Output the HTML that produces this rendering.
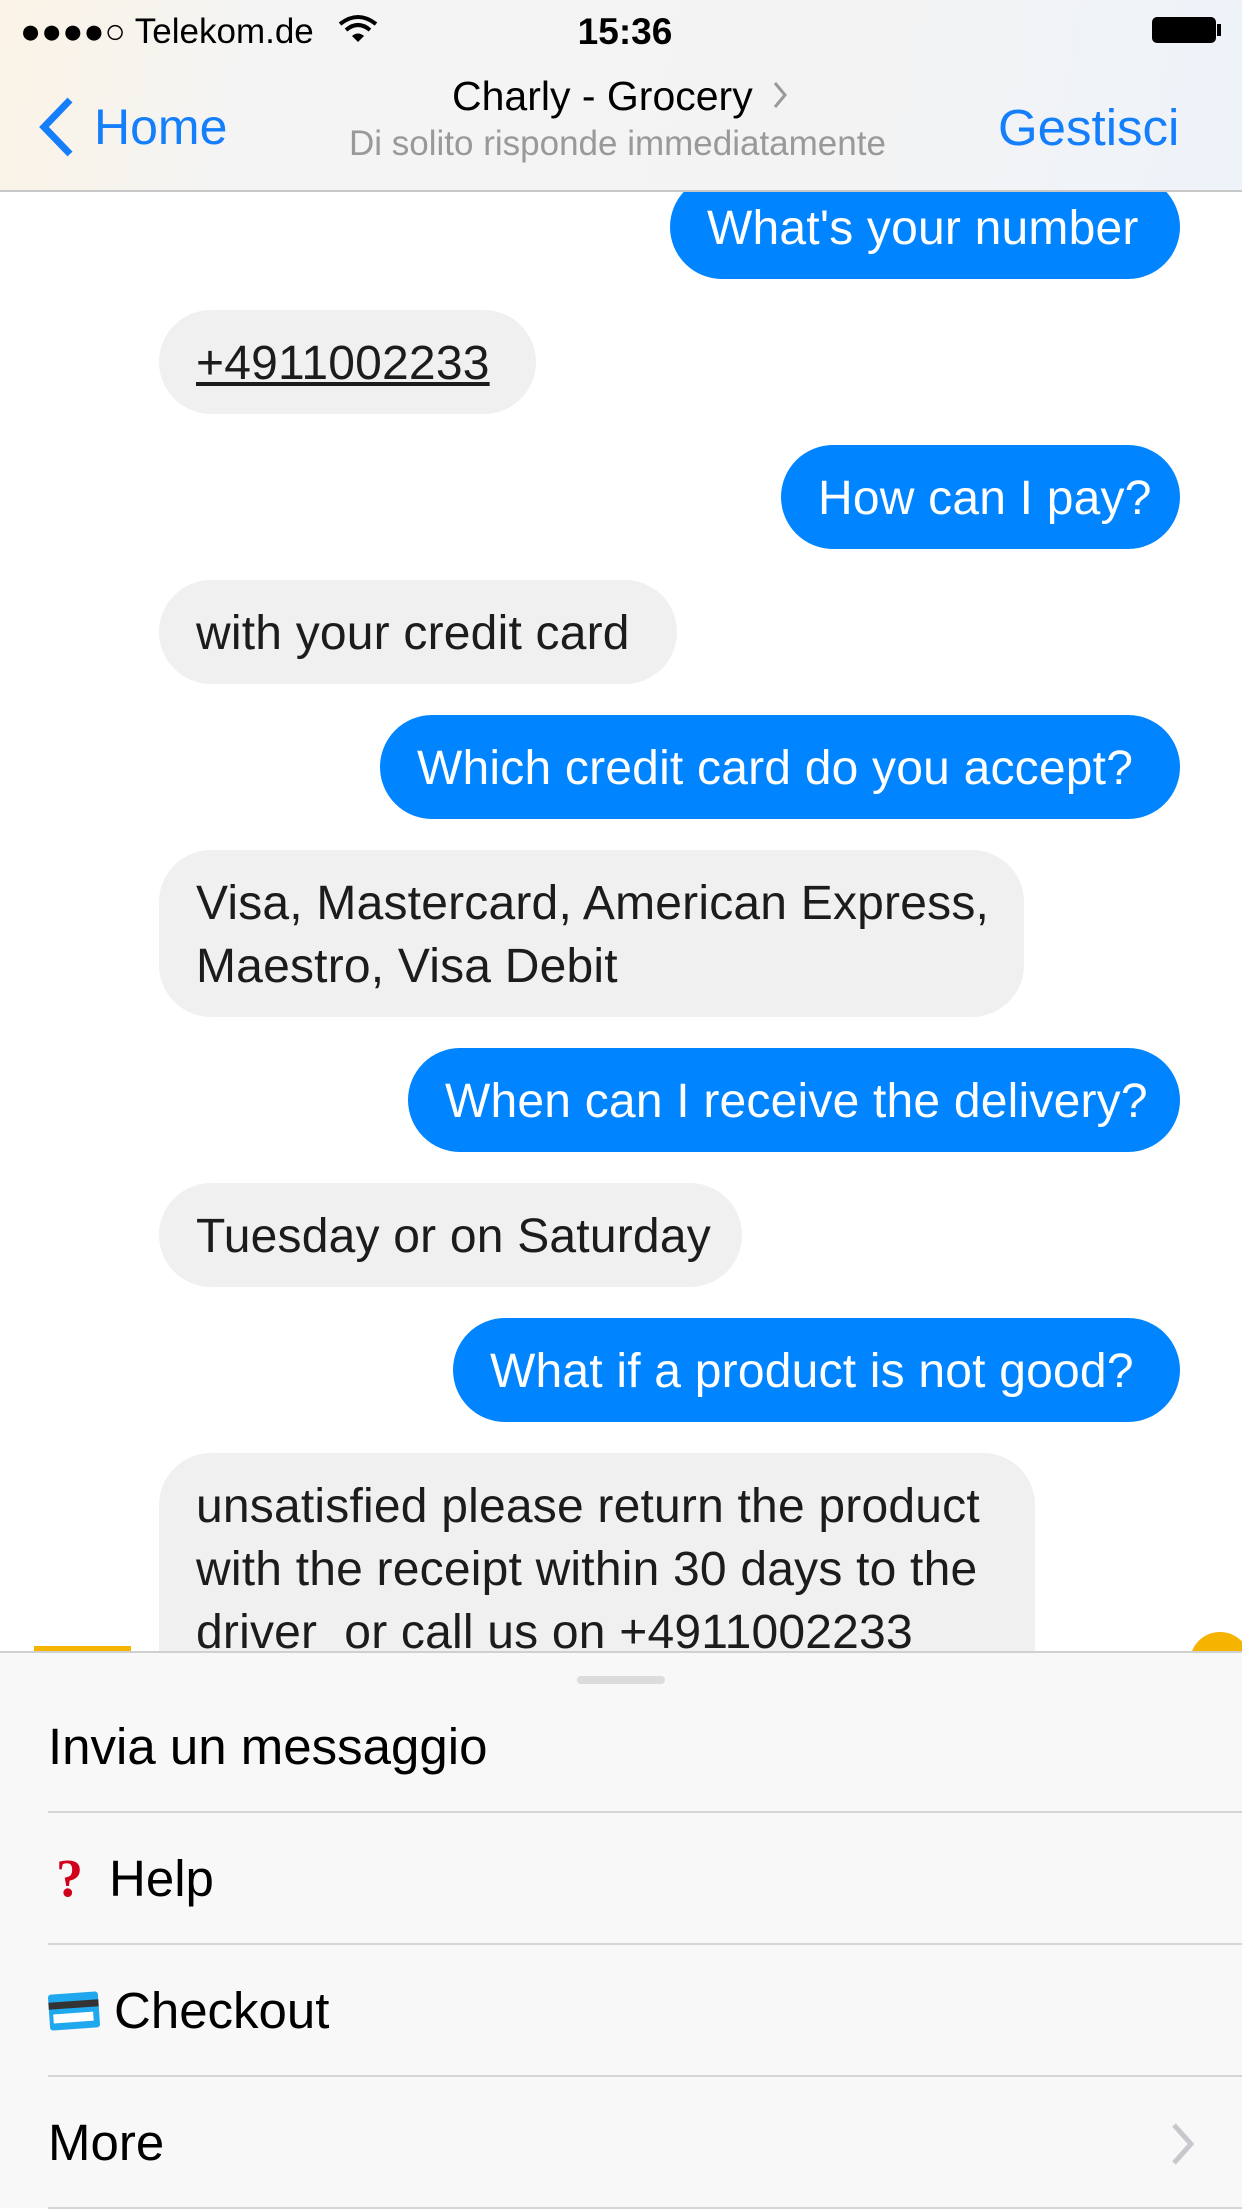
<!DOCTYPE html>
<html><head><meta charset="utf-8"><style>
*{margin:0;padding:0;box-sizing:border-box}
body{width:1242px;height:2208px;overflow:hidden;background:#fff;font-family:"Liberation Sans",sans-serif;position:relative}
.nav{position:absolute;left:0;top:0;width:1242px;height:192px;background:linear-gradient(100deg,#fbf3e6 0%,#f4f4f4 20%,#f3f3f3 70%,#eef3fa 100%);border-bottom:2px solid #c8c8c8;z-index:5}
.b{position:absolute;height:104px;border-radius:52px;font-size:48px;line-height:108px;padding:0 37px;white-space:nowrap;letter-spacing:0.2px}
.o{background:#0084ff;color:#fff}
.i{background:#f0f0f0;color:#1c1c1c}
.m{line-height:63px;padding:22px 37px}
.panel{position:absolute;left:0;top:1651px;width:1242px;height:557px;background:#f8f8f8;border-top:2px solid #d0d0d0;z-index:6}
.row{position:absolute;left:48px;right:0;height:132px;border-bottom:2px solid #d6d6d6;font-size:51px;color:#000;display:flex;align-items:center}
</style></head><body>
<div class="nav">
 <div style="position:absolute;left:20px;top:12px;font-size:35px;color:#000">●●●●○ Telekom.de</div>
 <svg style="position:absolute;left:338px;top:14px" width="40" height="30" viewBox="0 0 40 30"><path d="M2 10 Q20 -4 38 10" stroke="#000" stroke-width="4" fill="none"/><path d="M8 16 Q20 6 32 16" stroke="#000" stroke-width="4" fill="none"/><path d="M14 22 Q20 17 26 22 L20 28Z" fill="#000"/></svg>
 <div style="position:absolute;left:0;width:1250px;text-align:center;top:11px;font-size:37px;font-weight:bold;color:#000">15:36</div>
 <div style="position:absolute;left:1152px;top:17px;width:64px;height:26px;border:2px solid #000;border-radius:5px;background:#000"></div>
 <div style="position:absolute;left:1217px;top:24px;width:4px;height:12px;background:#000"></div>
 <svg style="position:absolute;left:36px;top:96px" width="40" height="62" viewBox="0 0 40 62"><path d="M34 4 L8 31 L34 58" stroke="#147efb" stroke-width="7" fill="none"/></svg>
 <div style="position:absolute;left:94px;top:98px;font-size:50px;color:#147efb">Home</div>
 <div style="position:absolute;left:998px;top:98px;font-size:51px;color:#147efb">Gestisci</div>
 <div style="position:absolute;left:452px;top:73px;font-size:41px;color:#000">Charly - Grocery</div>
 <svg style="position:absolute;left:770px;top:80px" width="20" height="30" viewBox="0 0 20 30"><path d="M5 3 L15 15 L5 27" stroke="#999" stroke-width="3" fill="none"/></svg>
 <div style="position:absolute;left:349px;top:124px;font-size:35px;color:#999">Di solito risponde immediatamente</div>
</div>

<div class="b o" style="left:670px;top:175px;width:510px">What's your number</div>
<div class="b i" style="left:159px;top:310px;width:377px"><span style="text-decoration:underline">+4911002233</span></div>
<div class="b o" style="left:781px;top:445px;width:399px">How can I pay?</div>
<div class="b i" style="left:159px;top:580px;width:518px">with your credit card</div>
<div class="b o" style="left:380px;top:715px;width:800px">Which credit card do you accept?</div>
<div class="b i m" style="left:159px;top:850px;width:865px;height:167px">Visa, Mastercard, American Express,<br>Maestro, Visa Debit</div>
<div class="b o" style="left:408px;top:1048px;width:772px">When can I receive the delivery?</div>
<div class="b i" style="left:159px;top:1183px;width:583px">Tuesday or on Saturday</div>
<div class="b o" style="left:453px;top:1318px;width:727px">What if a product is not good?</div>
<div class="b i m" style="left:159px;top:1453px;width:876px;height:260px">unsatisfied please return the product<br>with the receipt within 30 days to the<br>driver&nbsp; or call us on +4911002233</div>
<div style="position:absolute;left:34px;top:1646px;width:97px;height:6px;background:#f5b400"></div>
<div style="position:absolute;left:1190px;top:1632px;width:60px;height:60px;border-radius:50%;background:#f5b400"></div>

<div class="panel">
 <div style="position:absolute;left:577px;top:23px;width:88px;height:8px;border-radius:4px;background:#dcdcdc"></div>
 <div class="row" style="top:28px">Invia un messaggio</div>
 <div class="row" style="top:160px"><span style="color:#d0021b;font-weight:bold;margin:0 26px 0 8px;font-size:54px;font-family:'Liberation Serif',serif">?</span>Help</div>
 <div class="row" style="top:292px"><svg width="52" height="42" viewBox="0 0 52 42" style="margin-right:14px"><rect x="1" y="4" width="50" height="36" rx="3" fill="#1fa8ee" transform="rotate(-4 26 22)"/><rect x="1" y="12" width="50" height="7" fill="#333" transform="rotate(-4 26 22)"/><rect x="5" y="24" width="40" height="9" fill="#fff" transform="rotate(-4 26 22)"/></svg>Checkout</div>
 <div class="row" style="top:424px">More<svg style="position:absolute;left:1122px;top:45px" width="26" height="44" viewBox="0 0 26 44"><path d="M4 3 L21 22 L4 41" stroke="#c8c8cc" stroke-width="5" fill="none"/></svg></div>
</div>
</body></html>
